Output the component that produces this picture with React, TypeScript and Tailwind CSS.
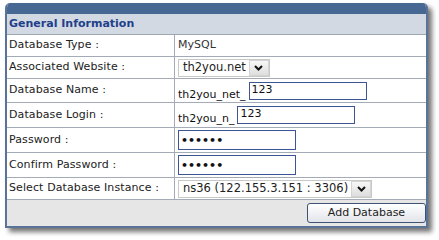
import { useState } from 'react'

type Row = {
    label: string
    h: string
    content: React.ReactNode
}

function FakeSelect({ value }: { value: string }) {
    return (
        <div className="flex items-center h-[18px] border border-[#c8c8c8] bg-white">
            <span className="pl-[4px] pr-[3px] text-[11.5px] leading-none text-[#222] whitespace-nowrap">{value}</span>
            <span className="flex items-center justify-center w-[20px] h-[16px] border border-[#d4d4d4] bg-gradient-to-b from-[#f7f7f7] to-[#dedede]">
                <svg width="9" height="6" viewBox="0 0 9 6">
                    <path d="M1 1 L4.5 4.5 L8 1" fill="none" stroke="#111" strokeWidth="2" />
                </svg>
            </span>
        </div>
    )
}

function TextInput({ value, width, password }: { value: string; width: string; password?: boolean }) {
    return (
        <div
            className={`${width} ${password ? 'h-[20px] items-center' : 'h-[18px] items-start'} flex border border-[#3f5593] bg-white pl-[2px] text-[11px] leading-[14px] text-[#111]`}
        >
            {password ? <span className="text-[11px] tracking-[0px] font-bold leading-none">••••••</span> : value}
        </div>
    )
}

function App() {
    const [dbName] = useState('123')
    const [dbLogin] = useState('123')

    const rows: Row[] = [
        { label: 'Database Type :', h: 'h-[22px]', content: <span className="text-[#333]">MySQL</span> },
        { label: 'Associated Website :', h: 'h-[22px]', content: <FakeSelect value="th2you.net" /> },
        {
            label: 'Database Name :',
            h: 'h-[24px]',
            content: (
                <div className="flex items-end gap-[3px]">
                    <span className="text-[#111] leading-[14px] mb-[-2px]">th2you_net_</span>
                    <TextInput value={dbName} width="w-[118px]" />
                </div>
            ),
        },
        {
            label: 'Database Login :',
            h: 'h-[25px]',
            content: (
                <div className="flex items-end gap-[3px]">
                    <span className="text-[#111] leading-[14px] mb-[-2px]">th2you_n_</span>
                    <TextInput value={dbLogin} width="w-[118px]" />
                </div>
            ),
        },
        { label: 'Password :', h: 'h-[25px]', content: <TextInput value="" width="w-[118px]" password /> },
        { label: 'Confirm Password :', h: 'h-[25px]', content: <TextInput value="" width="w-[118px]" password /> },
        {
            label: 'Select Database Instance :',
            h: 'h-[22px]',
            content: <FakeSelect value="ns36 (122.155.3.151 : 3306)" />,
        },
    ]

    return (
        <div className="w-[439px] h-[240px] bg-white pl-[5px] pt-[3px] font-['DejaVu_Sans',sans-serif] text-[11px]">
            <div className="w-[423px] rounded-t-[5px] border-2 border-t-0 border-[#5a7398] bg-white shadow-[4px_4px_5px_rgba(0,0,0,0.55)] overflow-hidden">
                {/* Top bar */}
                <div className="h-[11px] bg-[#486894]" />

                {/* Header */}
                <div className="h-[21px] flex items-center pl-[2px] bg-[#d3d9e2] border-b border-[#9ea6b2] font-bold text-[#21408a]">
                    General Information
                </div>

                {/* Rows */}
                {rows.map((row) => (
                    <div key={row.label} className={`${row.h} grid grid-cols-[168px_1fr] border-b border-[#a3abb6]`}>
                        <div className="flex items-center pl-[2px] border-r border-[#a3abb6] text-[#222] tracking-[0.1px]">
                            {row.label}
                        </div>
                        <div className="flex items-center pl-[3px]">{row.content}</div>
                    </div>
                ))}

                {/* Footer */}
                <div className="h-[26px] flex items-center justify-end bg-[#e6e6e6]">
                    <button className="w-[119px] h-[20px] rounded-[3px] border border-[#3d5275] bg-gradient-to-b from-white to-[#e2e4ea] text-[11px] text-[#222]">
                        Add Database
                    </button>
                </div>
            </div>
        </div>
    )
}

export default App
